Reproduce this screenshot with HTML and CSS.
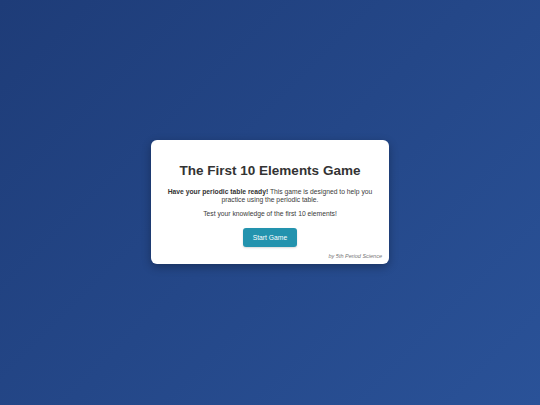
FILE: index.html
```html
<!DOCTYPE html>
<html>
<head>
<meta charset="utf-8">
<link rel="stylesheet" href="styles.css">
</head>
<body>
<main class="screen">
  <section class="card">
    <h1 class="title">The First 10 Elements Game</h1>
    <p class="intro"><strong>Have your periodic table ready!</strong> This game is designed to help you practice using the periodic table.</p>
    <p class="intro">Test your knowledge of the first 10 elements!</p>
    <button class="start">Start Game</button>
    <p class="credit">by 5th Period Science</p>
  </section>
</main>
</body>
</html>
```

FILE: styles.css
```css
html, body {
  margin: 0;
  padding: 0;
  height: 100%;
}
body {
  font-family: "Liberation Sans", Arial, sans-serif;
  background: linear-gradient(135deg, #1e3c78 0%, #2a5298 100%);
}
.screen {
  height: 405px;
  display: flex;
  align-items: center;
  justify-content: center;
}
.card {
  width: 238px;
  box-sizing: border-box;
  background: #fff;
  border-radius: 6px;
  padding: 21px 7px 4px;
  box-shadow: 0 3px 10px rgba(0, 0, 0, 0.3);
  display: flex;
  flex-direction: column;
  align-items: center;
  text-align: center;
  margin-top: -1px;
}
.title {
  margin: 0 0 7px;
  font-size: 13.5px;
  line-height: 20px;
  font-weight: bold;
  color: #333;
}
.intro {
  margin: 0 0 6px;
  font-size: 6.75px;
  line-height: 8px;
  color: #3a3a3a;
}
.intro + .intro {
  margin-bottom: 10px;
}
.intro strong {
  color: #333;
}
.start {
  width: 54px;
  height: 19px;
  border: none;
  border-radius: 3px;
  background: #2393ae;
  color: #fff;
  font-family: "Liberation Sans", Arial, sans-serif;
  font-size: 6.75px;
  padding: 0;
  box-shadow: 0 1px 2px rgba(0,0,0,0.15);
}
.credit {
  align-self: flex-end;
  margin: 6px 0 0;
  font-size: 5.5px;
  line-height: 7px;
  font-style: italic;
  color: #777;
}
```
